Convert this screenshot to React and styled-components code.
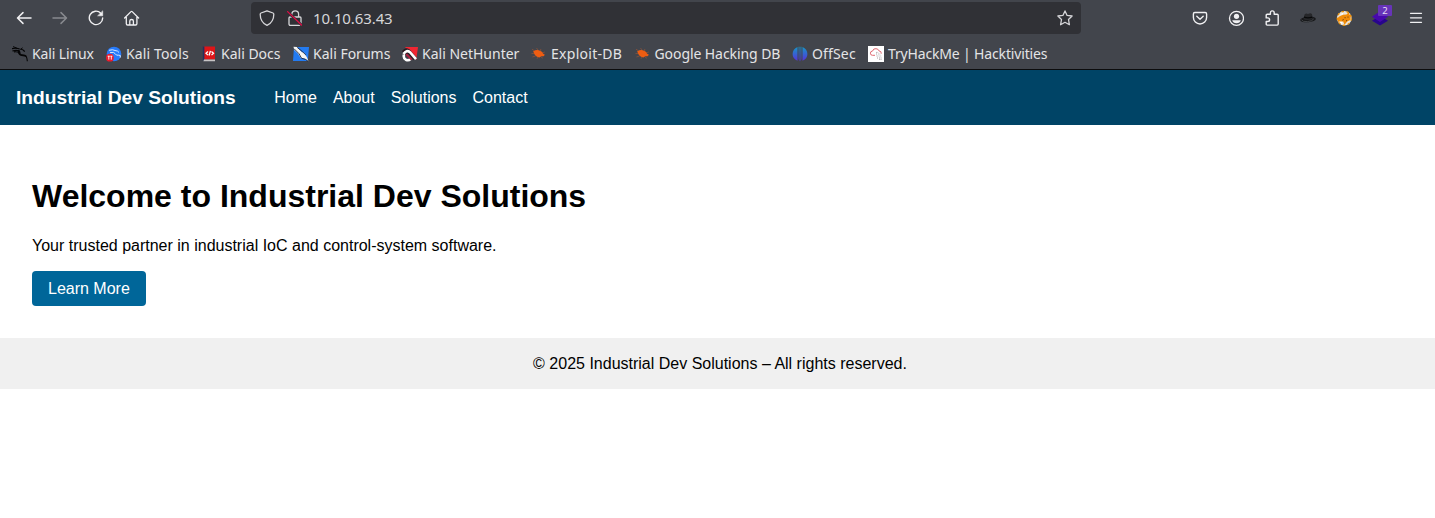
import React from "react";
import styled, { createGlobalStyle } from "styled-components";

const GlobalStyle = createGlobalStyle`
  *, *::before, *::after { box-sizing: border-box; }
  body {
    margin: 0;
    background: #fff;
    color: #000;
    font: 16px/18px "Liberation Sans", Arial, sans-serif;
  }
`;

const Chrome = styled.div`
  height: 70px;
  background: #42454c;
  border-bottom: 1px solid #0c0c0d;
  color: #fbfbfe;
  font-family: "Noto Sans", sans-serif;
`;

const Toolbar = styled.div`
  display: flex;
  align-items: center;
  height: 36px;
  padding: 0 1px 0 6px;
`;

const ToolButton = styled.button`
  position: relative;
  display: flex;
  align-items: center;
  justify-content: center;
  flex: none;
  width: 36px;
  height: 32px;
  padding: 0;
  border: 0;
  background: none;
  color: #f0f0f2;
  opacity: ${(p) => (p.$dim ? 0.4 : 1)};
`;

const UrlBar = styled.div`
  display: flex;
  align-items: center;
  width: 830px;
  height: 32px;
  margin: 0 101px;
  padding: 0 8px;
  border-radius: 4px;
  background: #303136;
  color: #d6d6d9;
`;

const Lock = styled.span`
  display: flex;
  margin: 0 10px 0 12px;
`;

const Address = styled.span`
  flex: 1;
  font-size: 15px;
  line-height: 20px;
  letter-spacing: -0.1px;
`;

const Actions = styled.div`
  display: flex;
`;

const Badge = styled.span`
  position: absolute;
  top: 3px;
  left: 16px;
  width: 14px;
  height: 11px;
  border-radius: 1px;
  background: #6734b8;
  color: #e6dcf5;
  font: 9.5px/11px "Noto Sans", sans-serif;
  text-align: center;
`;

const Bookmarks = styled.nav`
  display: flex;
  align-items: center;
  gap: 12px;
  height: 33px;
  padding: 2px 12px 0;
  color: #e4e4e6;
`;

const Bookmark = styled.a`
  display: flex;
  align-items: center;
  gap: 4px;
  flex: none;
  width: ${(p) => p.$width}px;
  font-size: 14px;
  line-height: 20px;
  letter-spacing: ${(p) => p.$tracking}px;
  white-space: nowrap;
`;

const Glyph = styled.svg`
  display: block;
  flex: none;
  width: 16px;
  height: 16px;
`;

const Header = styled.header`
  display: flex;
  align-items: center;
  height: 55px;
  padding: 0 16px;
  background: #004466;
  color: #fff;
`;

const Brand = styled.div`
  width: 258.2px;
  font-size: 19.2px;
  font-weight: bold;
  line-height: 22px;
`;

const Menu = styled.nav`
  display: flex;
  gap: 16px;
`;

const Main = styled.main`
  padding: 53px 32px 32px;
`;

const Title = styled.h1`
  margin: 0 0 22px;
  font-size: 32px;
  line-height: 37px;
`;

const Lead = styled.p`
  margin: 0 0 16px;
  line-height: 18px;
`;

const LearnMore = styled.a`
  display: block;
  width: 114px;
  height: 35px;
  padding: 0 16px;
  border-radius: 4px;
  background: #006699;
  color: #fff;
  line-height: 35px;
  white-space: nowrap;
`;

const Footer = styled.footer`
  height: 51px;
  padding: 17px 0 0 5px;
  background: #f0f0f0;
  text-align: center;
`;

const Line = ({ children, width = 1.3 }) => (
  <Glyph viewBox="0 0 16 16" fill="none" stroke="currentColor" strokeWidth={width} strokeLinecap="round" strokeLinejoin="round">
    {children}
  </Glyph>
);

const BackIcon = () => <Line width={1.5}><path d="M15 8H1.6M7 2.6 1.5 8 7 13.4" /></Line>;
const ForwardIcon = () => <Line width={1.5}><path d="M1 8h13.4M9 2.6 14.5 8 9 13.4" /></Line>;
const ReloadIcon = () => (
  <Line width={1.4}>
    <path d="M12.8 3.2A6.7 6.7 0 1 0 14.7 8" />
    <path d="M14.7 1.2v4.6H10z" fill="currentColor" strokeWidth="0.6" />
  </Line>
);
const HomeIcon = () => (
  <Line>
    <path d="M.6 8 7 1.6q.6-.6 1.2 0L14.6 8M2.3 7v6.7q0 1.3 1.3 1.3h8q1.3 0 1.3-1.3V7M5.8 15v-4q0-1.5 1.8-1.5t1.8 1.5v4" />
  </Line>
);
const ShieldIcon = () => (
  <Line><path d="M8 .8 14 3q.8.3.8 1.2C14.8 9.5 12.5 13.2 8 15.4 3.5 13.2 1.2 9.5 1.2 4.2q0-.9.8-1.2z" /></Line>
);
const LockIcon = () => (
  <Line>
    <path d="M4.8 7V4.2a3.4 3.4 0 0 1 6.8 0V7M3 7h10q1 0 1 1v6q0 1.3-1.3 1.3H3.3Q2 15.3 2 14V8q0-1 1-1z" />
    <path d="M1 2.2 14.5 15" stroke="#303136" strokeWidth="2.6" />
    <path d="M.6 1.6 14.5 15" stroke="#e00b45" strokeWidth="1.3" />
  </Line>
);
const StarIcon = () => (
  <Line><path d="m8 .9 2.1 4.5 5 .6-3.6 3.5.9 5.2L8 12.3l-4.4 2.4.9-5.2L.9 6l5-.6z" /></Line>
);
const PocketIcon = () => (
  <Line width={1.4}><path d="M2.8 2.5h10.4q1.4 0 1.4 1.4v3.5a6.6 6.6 0 0 1-13.2 0V3.9q0-1.4 1.4-1.4zM4.8 6.2 8 9.2l3.2-3" /></Line>
);
const AccountIcon = () => (
  <Line>
    <circle cx="8.5" cy="8.3" r="7" />
    <circle cx="8.5" cy="6.3" r="2.6" fill="currentColor" stroke="none" />
    <path d="M4.2 10.3h8.6q-.8 3-4.3 3t-4.3-3z" fill="currentColor" stroke="none" />
  </Line>
);
const PuzzleIcon = () => (
  <Line width={1.4}>
    <path d="M2.2 6.9V5.2q0-1 1-1h3.2V2.8a1.9 1.9 0 0 1 3.8 0v1.4h3q1 0 1 1v8.9q0 1-1 1h-10q-1 0-1-1v-2.6h1.6a1.8 1.8 0 0 0 0-3.6H2.2z" />
  </Line>
);
const HatIcon = () => (
  <Glyph viewBox="0 0 16 16">
    <ellipse cx="8" cy="9.5" rx="7.8" ry="2.7" transform="rotate(-5 8 9)" fill="#17181a" />
    <path d="M3.5 9.2 4.5 4.6Q6 2.8 8 3.9q3-1.3 4 .4L12.8 9q-5 2-9.3.2z" fill="#26272a" />
    <path d="M1.5 9.8q1 2.2 6 1.8t6.3-2.8" fill="none" stroke="#54575c" strokeWidth=".7" />
    <path d="M4 7.2q4 1.3 8.3-.1" fill="none" stroke="#08090a" strokeWidth="1.4" />
  </Glyph>
);
const FoxIcon = () => (
  <Glyph viewBox="0 0 16 16">
    <circle cx="8.3" cy="8.3" r="7.3" fill="#eae4da" />
    <circle cx="8.3" cy="8.3" r="7" fill="none" stroke="#e6940f" strokeWidth="1.3" strokeDasharray="2.5 2.5" />
    <path d="M2.8 6.8 7 4.8l3.5-.3 2.2-2.2.8 2.4 1.5.6-.8 4.7-3 1.5-2.7 3.2-1.3-3.2-4.8.4L1 9z" fill="#f18c09" />
    <path d="m3 11.5 3.5.2-.5 2.6M4 4.5 7 2.8v1.6z" fill="#fff" />
    <path d="M12 6.5v1.2M8.5 7.7h1.2M6.3 10.2l1.5-.7M10.6 10v1.2" stroke="#68401a" strokeWidth=".9" />
  </Glyph>
);
const LayersIcon = () => (
  <Glyph viewBox="0 0 16 16">
    <path d="m0 10.7 3.5-2.2L8 11l4.5-2.5 3.5 2.2-8 4.8z" fill="#28058c" />
    <path d="m0 6.7 8-5.5 8 5.5-8 5.3z" fill="#4708ad" />
  </Glyph>
);
const MenuIcon = () => <Line width={1.3}><path d="M2.5 3.3h11M2.5 7.8h11M2.5 12.3h11" /></Line>;

const dragon = "M0 2.6q4-.8 7.4.2M.4 5q4-1.4 7 .1c1.3 1.5-.3 2.8 1.3 3.6 1.6.7 4-.5 5.4 1.5 1 1.5 1 2.7 1.2 5M7.4 3q3.6 0 5.3 2.6M2 6q3-.7 5.7 1.3";

const KaliMark = () => (
  <Glyph viewBox="0 0 16 16" fill="none" stroke="#050506">
    <path d={dragon} strokeWidth="1.1" />
    <path d="M6.8 4q-.8 4 2.3 5.1c1.7.6 4 0 5 1.4" strokeWidth="1.6" />
    <path d="m1 .6 5.2 2.1M9 3l1.6-1.2" />
  </Glyph>
);
const ToolsMark = () => (
  <Glyph viewBox="0 0 16 16">
    <circle cx="8" cy="8" r="7.3" fill="#277bfb" />
    <path d="M3 4.3q4-1.2 6 .2 3 .2 4 2M4 6.6q4.2-1 5.2 1.1t3.5 1.5 1.5 2.4" fill="none" stroke="#d9e9ff" strokeWidth="1" />
    <circle cx="3.9" cy="11.7" r="3.9" fill="#ec1c2c" />
    <path d="M1.7 10.2h2.1M2.8 10v3.6M4.3 10.2h2.1M5.3 10v3.6" stroke="#fff" strokeWidth=".9" />
  </Glyph>
);
const DocsMark = () => (
  <Glyph viewBox="0 0 16 16">
    <path d="M2.5.5H14v13H2.5z" fill="#de1518" />
    <path d="M1.8.5h1.6v14H1.8z" fill="#24305f" />
    <path d="M3 13.6h11v1.7H2.4z" fill="#c6c4c5" />
    <path d="m7 5.4-2 1.8 2 1.9M10.5 5.4l2 1.8-2 1.9M9.4 4.8 8.1 9.5" fill="none" stroke="#fff" strokeWidth="1.3" />
  </Glyph>
);
const ForumsMark = () => (
  <Glyph viewBox="0 0 16 16">
    <path d="M1 1h15l-1.2 14H0z" fill="#237bf1" />
    <path d="M.5.8 4 1l5 5.3 2 .2 3 5 1.5 3.8-4-2.7-3.7-.5L5 7.5 1.2 4z" fill="#f5f5f2" />
    <path d="m1 2.7 5 5 2.5 4.5 4.3 1.3L15 15.3M4.3 1.5l5 4 3.5 3.4" fill="none" stroke="#18253d" strokeWidth=".9" />
  </Glyph>
);
const HunterMark = () => (
  <Glyph viewBox="0 0 16 16">
    <path d="M3 1h13l-1.8 13z" fill="#ef2632" />
    <path d="M.7 5.8Q3.6 1.9 7 4.3l7 8.1M1.5 9Q5 5 8 8.5t4.5 5.2" fill="none" stroke="#2b1a20" strokeWidth="2" />
    <path d="M1.5 8Q4.5 3.3 8 6.2l6 7M2 8.5q-1 3.5 1.8 5.2 2.8 1.3 4.6-.6" fill="none" stroke="#fff" strokeWidth="2.6" />
    <path d="m4.2 8.2 5.4 5.5" stroke="#b31c3d" strokeWidth="1.8" />
  </Glyph>
);
const BugMark = () => (
  <Glyph viewBox="0 0 16 16">
    <path d="M2.2 5.2q4-2.5 7.3-.2 2.2.5 2.7 2.7l1.7 1.1-1.3 1.5-2.2-.1-2 1.2q-3.6-.3-5.2-3.6z" fill="#ee5d12" />
    <path d="M3 4.5 1 3.2M7 4 5.5 2M9.5 5l.3-2M3 7.5H.5M4.6 10l-3.2 1M7 11l-1 1.8M10 11l1.8 1.2M11.8 7l2-1.1" stroke="#a55532" strokeWidth=".6" />
  </Glyph>
);
const OffSecMark = () => (
  <Glyph viewBox="0 0 16 16" fill="url(#offsec)">
    <defs>
      <linearGradient id="offsec" gradientUnits="userSpaceOnUse" x1="0" y1="1" x2="0" y2="15">
        <stop stopColor="#1695c8" /><stop offset="1" stopColor="#5631db" />
      </linearGradient>
    </defs>
    <path d="M5.5 1v13.8Q.5 12.8.6 8t4.9-7zM10.5 1v13.8q5-2 4.9-6.8t-4.9-7z" />
    <path d="M6.6.8h.9v14.7L6.6 13zM8.5.8h.9V13l-.9 2.5z" />
  </Glyph>
);
const TryHackMark = () => (
  <Glyph viewBox="0 0 16 16">
    <path d="M0 0h16v16H0z" fill="#fff" />
    <path d="M7 9.3H4.5a2.1 2.1 0 0 1 0-4.2Q5.5 2.2 8 2.7q2.2 0 3 2.2 2.5.1 2.3 2.8" fill="none" stroke="#df6870" />
    <path d="M8 8h1.2M10.3 8h2M8.5 10h2M11.5 10h1.8M9 12h1M11 12h2.6M11.2 13.5h2.3M8.2 6.4h2" stroke="#aaa2a5" strokeWidth="1" strokeDasharray="1.1 .5" />
  </Glyph>
);

const bookmarks = [
  { label: "Kali Linux", Icon: KaliMark, width: 82, tracking: -0.12 },
  { label: "Kali Tools", Icon: ToolsMark, width: 83, tracking: 0.13 },
  { label: "Kali Docs", Icon: DocsMark, width: 80, tracking: 0 },
  { label: "Kali Forums", Icon: ForumsMark, width: 97, tracking: 0 },
  { label: "Kali NetHunter", Icon: HunterMark, width: 117, tracking: 0 },
  { label: "Exploit-DB", Icon: BugMark, width: 91.5, tracking: 0.28 },
  { label: "Google Hacking DB", Icon: BugMark, width: 145.5, tracking: -0.08 },
  { label: "OffSec", Icon: OffSecMark, width: 64, tracking: 0.15 },
  { label: "TryHackMe | Hacktivities", Icon: TryHackMark, width: 180, tracking: -0.16 },
];

export default function App() {
  return (
    <>
      <GlobalStyle />
      <Chrome>
        <Toolbar>
          <ToolButton aria-label="Back"><BackIcon /></ToolButton>
          <ToolButton aria-label="Forward" $dim><ForwardIcon /></ToolButton>
          <ToolButton aria-label="Reload"><ReloadIcon /></ToolButton>
          <ToolButton aria-label="Home"><HomeIcon /></ToolButton>
          <UrlBar>
            <ShieldIcon />
            <Lock><LockIcon /></Lock>
            <Address>10.10.63.43</Address>
            <StarIcon />
          </UrlBar>
          <Actions>
            <ToolButton aria-label="Pocket"><PocketIcon /></ToolButton>
            <ToolButton aria-label="Account"><AccountIcon /></ToolButton>
            <ToolButton aria-label="Extensions"><PuzzleIcon /></ToolButton>
            <ToolButton aria-label="Hat"><HatIcon /></ToolButton>
            <ToolButton aria-label="Proxy"><FoxIcon /></ToolButton>
            <ToolButton aria-label="Analyzer"><LayersIcon /><Badge>2</Badge></ToolButton>
            <ToolButton aria-label="Menu"><MenuIcon /></ToolButton>
          </Actions>
        </Toolbar>
        <Bookmarks>
          {bookmarks.map(({ label, Icon, width, tracking }) => (
            <Bookmark key={label} $width={width} $tracking={tracking}>
              <Icon />
              <span>{label}</span>
            </Bookmark>
          ))}
        </Bookmarks>
      </Chrome>
      <Header>
        <Brand>Industrial Dev Solutions</Brand>
        <Menu>
          <a>Home</a>
          <a>About</a>
          <a>Solutions</a>
          <a>Contact</a>
        </Menu>
      </Header>
      <Main>
        <Title>Welcome to Industrial Dev Solutions</Title>
        <Lead>Your trusted partner in industrial IoC and control-system software.</Lead>
        <LearnMore>Learn More</LearnMore>
      </Main>
      <Footer>© 2025 Industrial Dev Solutions – All rights reserved.</Footer>
    </>
  );
}
